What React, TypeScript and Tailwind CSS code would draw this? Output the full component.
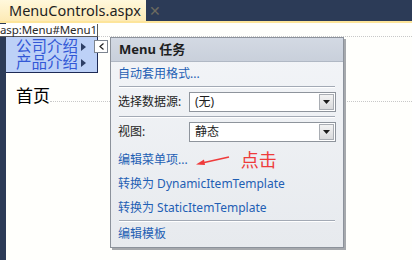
import React from "react";

const cjk = '"Noto Sans", "Noto Sans CJK SC", sans-serif';

function Dropdown({ value }: { value: string }) {
  return (
    <div className="flex h-[20px] w-[147px] items-center border border-[#8e949c] bg-white">
      <span className="flex-1 pl-[5px] text-[12px] leading-none text-[#1e1e1e]">{value}</span>
      <div className="mr-[1px] flex h-[16px] w-[15px] items-center justify-center border border-[#a9adb3] bg-gradient-to-b from-[#f3f3f3] to-[#d9dadc]">
        <svg width="7" height="4" viewBox="0 0 7 4">
          <path d="M0 0 H7 L3.5 4 Z" fill="#1b1b1b" />
        </svg>
      </div>
    </div>
  );
}

function Sep() {
  return (
    <div className="mx-[2px]">
      <div className="h-px bg-[#a3aab5]" />
      <div className="h-px bg-white" />
    </div>
  );
}

export default function App() {
  return (
    <div
      className="relative flex h-[260px] w-[412px] flex-col overflow-hidden bg-white"
      style={{ fontFamily: cjk }}
    >
      {/* top bar */}
      <div className="flex h-[21px] shrink-0 bg-[#2c3b57]">
        <div className="flex w-[146px] items-center bg-gradient-to-b from-[#fff8dc] to-[#fdeab5] pl-[9px]">
          <span className="text-[14.5px] leading-none text-[#1f1f1f]">MenuControls.aspx</span>
          <span className="ml-[8px] text-[14px] leading-none text-[#6d6b60]">✕</span>
        </div>
      </div>
      <div className="h-[2px] shrink-0 bg-[#fde59a]" />
      {/* body */}
      <div className="flex flex-1">
        <div className="w-[6px] shrink-0 bg-[#2c3b57]" />
        <div className="relative flex flex-1 flex-col bg-[#fffffc]">
          {/* element label */}
          <div className="absolute left-[-6px] top-[1px] z-10 flex h-[13px] w-[98px] items-center border-b border-r border-[#5a5a5a] bg-white">
            <span className="block text-[11.5px] leading-[12px] tracking-[-0.1px] text-[#2a2a2a]">asp:Menu#Menu1</span>
          </div>
          {/* menu row */}
          <div className="mt-[13px] flex">
            <div className="flex h-[37px] w-[92px] flex-col gap-px border-b border-r border-[#1d2a55] bg-[#bdd1f7] pl-[10px] pt-[3px]">
              {["公司介绍", "产品介绍"].map((t) => (
                <div key={t} className="flex h-[15px] items-center">
                  <span className="block h-[15px] text-[15.5px] leading-[15px] text-[#3358d6]">{t}</span>
                  <svg className="ml-[3px]" width="5" height="8" viewBox="0 0 5 8">
                    <path d="M0 0 L5 4 L0 8 Z" fill="#2d3f66" />
                  </svg>
                </div>
              ))}
            </div>
            <div className="flex-1 border-t border-dotted border-[#c8c8c8]" />
          </div>
          {/* smart tag button */}
          <div className="absolute left-[88px] top-[17px] z-10 flex h-[13px] w-[14px] items-center justify-center border border-[#7d8590] bg-white">
            <svg width="5" height="7" viewBox="0 0 5 7">
              <path d="M4.5 0.5 L1 3.5 L4.5 6.5" stroke="#222" strokeWidth="1.2" fill="none" />
            </svg>
          </div>
          {/* 首页 row */}
          <div className="mt-[14px] flex items-end">
            <span className="ml-[10px] text-[17px] leading-none text-black">首页</span>
            <div className="mb-[2px] flex-1 border-b border-dotted border-[#c8c8c8]" />
          </div>

          {/* task panel */}
          <div className="absolute left-[104px] top-[14px] z-20 flex h-[211px] w-[234px] flex-col border border-[#8c929b] bg-gradient-to-b from-[#f3f5f8] to-[#e7eaee] shadow-[2px_2px_0_#a6a9ad]">
            <div className="flex h-[24px] shrink-0 items-center border-b border-[#b0b8c4] bg-gradient-to-b from-[#d3d9e3] to-[#c9d0db] pl-[8px]">
              <span className="text-[13px] font-bold leading-none text-[#1e1e1e]">Menu 任务</span>
            </div>
            <div className="flex flex-col px-[6px]">
              <div className="flex h-[24px] items-center pl-[1px]">
                <span className="text-[12px] leading-none text-[#1f5fb4]">自动套用格式...</span>
              </div>
              <Sep />
              <div className="flex h-[28px] items-center justify-between pl-[1px] pr-[1px]">
                <span className="text-[12px] leading-none text-[#1e1e1e]">选择数据源:</span>
                <Dropdown value="(无)" />
              </div>
              <Sep />
              <div className="flex h-[28px] items-center justify-between pl-[1px] pr-[1px]">
                <span className="text-[12px] leading-none text-[#1e1e1e]">视图:</span>
                <Dropdown value="静态" />
              </div>
              <div className="h-[2px]" />
              <div className="flex h-[24px] items-center pl-[1px]">
                <span className="text-[12px] leading-none text-[#1f5fb4]">编辑菜单项...</span>
                <svg className="ml-[8px] mt-[2px]" width="34" height="10" viewBox="0 0 34 10">
                  <path d="M33 1 L6 7" stroke="#ef3b3b" strokeWidth="1.6" fill="none" />
                  <path d="M0 8.5 L8 3.5 L9 9 Z" fill="#ef3b3b" />
                </svg>
                <span className="ml-[11px] text-[18px] leading-none text-[#ee3b3b]">点击</span>
              </div>
              <div className="flex h-[24px] items-center pl-[1px]">
                <span className="text-[12px] leading-none text-[#1f5fb4]">转换为 DynamicItemTemplate</span>
              </div>
              <div className="flex h-[24px] items-center pl-[1px]">
                <span className="text-[12px] leading-none text-[#1f5fb4]">转换为 StaticItemTemplate</span>
              </div>
              <Sep />
              <div className="flex h-[24px] items-center pl-[1px]">
                <span className="text-[12px] leading-none text-[#1f5fb4]">编辑模板</span>
              </div>
            </div>
          </div>
        </div>
      </div>
    </div>
  );
}
